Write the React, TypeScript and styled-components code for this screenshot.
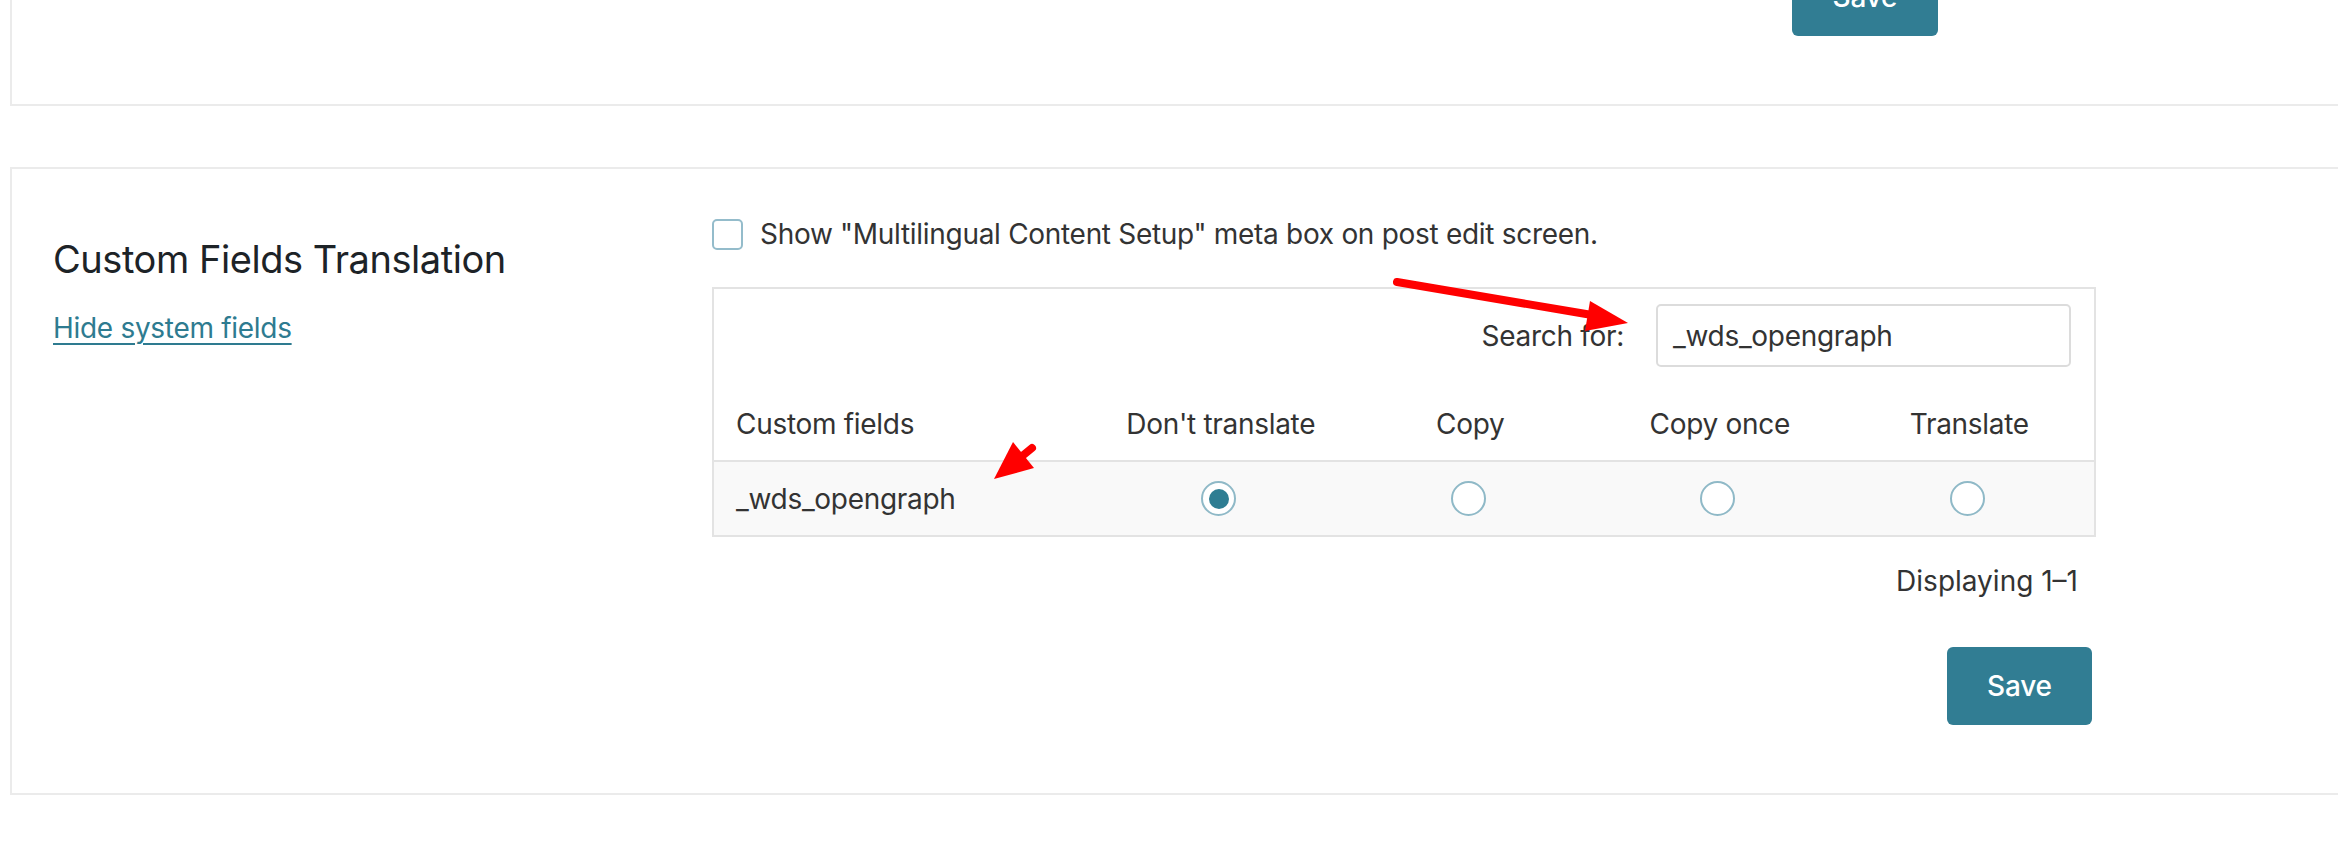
import React from "react";
import styled, { createGlobalStyle } from "styled-components";

const GlobalStyle = createGlobalStyle`
  html, body {
    margin: 0;
    padding: 0;
    background: #ffffff;
  }
  body {
    font-family: Inter, "Noto Sans", "Liberation Sans", sans-serif;
    color: #333333;
  }
  * { box-sizing: border-box; }
`;

const Page = styled.div`
  position: relative;
  width: 2338px;
  height: 848px;
  overflow: hidden;
  background: #ffffff;
  letter-spacing: -0.3px;
`;

const TopPanel = styled.section`
  margin-left: 10px;
  height: 106px;
  border-left: 2px solid #ebebeb;
  border-bottom: 2px solid #ebebeb;
  display: flex;
  justify-content: flex-end;
  align-items: flex-start;
  padding-right: 400px;
`;

const SaveButton = styled.button<{ $width: number; $offsetTop?: number }>`
  width: ${(p) => p.$width}px;
  height: 78px;
  margin-top: ${(p) => p.$offsetTop ?? 0}px;
  border: none;
  border-radius: 6px;
  background: #317d93;
  color: #ffffff;
  font-family: Inter, "Noto Sans", "Liberation Sans", sans-serif;
  font-size: 28px;
  line-height: 40px;
  font-weight: 500;
  letter-spacing: -0.2px;
  cursor: pointer;
  padding: 0;
`;

const SettingsPanel = styled.section`
  margin-top: 61px;
  margin-left: 10px;
  border: 2px solid #ebebeb;
  border-right: none;
  display: grid;
  grid-template-columns: 700px 1384px;
  padding-top: 45px;
  padding-bottom: 68px;
`;

const LeftColumn = styled.div`
  padding-left: 41px;
  display: flex;
  flex-direction: column;
  align-items: flex-start;
`;

const Heading = styled.h3`
  margin: 22px 0 0;
  font-size: 38px;
  line-height: 46px;
  font-weight: 400;
  letter-spacing: -0.45px;
  color: #1d2327;
`;

const TextLink = styled.a`
  margin-top: 26px;
  font-size: 28px;
  line-height: 40px;
  color: #2e7b90;
  text-decoration: underline;
  text-underline-offset: 5px;
  text-decoration-thickness: 2px;
  cursor: pointer;
`;

const RightColumn = styled.div`
  display: flex;
  flex-direction: column;
`;

const CheckRow = styled.label`
  display: flex;
  align-items: center;
  gap: 17px;
  height: 40px;
  font-size: 28px;
  line-height: 40px;
  color: #333333;
`;

const CheckBox = styled.span`
  width: 31px;
  height: 31px;
  border: 2px solid #94bccb;
  border-radius: 5px;
  background: #ffffff;
  flex: none;
`;

const FieldsTable = styled.div`
  margin-top: 33px;
  width: 1384px;
  border: 2px solid #e3e3e3;
`;

const SearchBar = styled.div`
  display: flex;
  justify-content: flex-end;
  align-items: center;
  gap: 32px;
  padding: 15px 23px 21px;
  font-size: 28px;
  line-height: 40px;
`;

const SearchInput = styled.div`
  width: 415px;
  height: 63px;
  border: 2px solid #dcdcdc;
  border-radius: 5px;
  padding-left: 15px;
  display: flex;
  align-items: center;
  font-size: 28px;
  color: #333333;
  background: #ffffff;
`;

const Row = styled.div<{ $shaded?: boolean }>`
  display: grid;
  grid-template-columns: 382px repeat(4, 1fr);
  align-items: center;
  background: ${(p) => (p.$shaded ? "#f9f9f9" : "#ffffff")};
  border-bottom: ${(p) => (p.$shaded ? "none" : "2px solid #e3e3e3")};
  height: ${(p) => (p.$shaded ? "73px" : "74px")};
`;

const Cell = styled.div<{ $first?: boolean }>`
  padding: 0 ${(p) => (p.$first ? "22px" : "0")};
  text-align: ${(p) => (p.$first ? "left" : "center")};
  font-size: 28px;
  line-height: 40px;
  color: #333333;
  display: flex;
  justify-content: ${(p) => (p.$first ? "flex-start" : "center")};
  align-items: center;
`;

const Radio = styled.span<{ $checked?: boolean }>`
  width: 35px;
  height: 35px;
  border-radius: 50%;
  border: 2px solid #8fb9c7;
  background: #ffffff;
  margin-right: 4px;
  display: flex;
  align-items: center;
  justify-content: center;
  &::after {
    content: "";
    width: 20px;
    height: 20px;
    border-radius: 50%;
    background: ${(p) => (p.$checked ? "#2e7d92" : "transparent")};
  }
`;

const Pagination = styled.div`
  margin-top: 24px;
  padding-right: 18px;
  text-align: right;
  font-size: 28px;
  line-height: 40px;
  letter-spacing: 0;
  color: #333333;
`;

const SaveRow = styled.div`
  margin-top: 46px;
  display: flex;
  justify-content: flex-end;
  padding-right: 4px;
`;

const Annotations = styled.svg`
  position: absolute;
  top: 0;
  left: 0;
  pointer-events: none;
`;

const columns = ["Don't translate", "Copy", "Copy once", "Translate"];

export default function App() {
  return (
    <>
      <GlobalStyle />
      <Page>
        <TopPanel>
          <SaveButton $width={146} $offsetTop={-42}>Save</SaveButton>
        </TopPanel>

        <SettingsPanel>
          <LeftColumn>
            <Heading>Custom Fields Translation</Heading>
            <TextLink>Hide system fields</TextLink>
          </LeftColumn>

          <RightColumn>
            <CheckRow>
              <CheckBox />
              Show "Multilingual Content Setup" meta box on post edit screen.
            </CheckRow>

            <FieldsTable>
              <SearchBar>
                <span>Search for:</span>
                <SearchInput>_wds_opengraph</SearchInput>
              </SearchBar>
              <Row>
                <Cell $first>Custom fields</Cell>
                {columns.map((c) => (
                  <Cell key={c}>{c}</Cell>
                ))}
              </Row>
              <Row $shaded>
                <Cell $first>_wds_opengraph</Cell>
                {columns.map((c, i) => (
                  <Cell key={c}>
                    <Radio $checked={i === 0} />
                  </Cell>
                ))}
              </Row>
            </FieldsTable>

            <Pagination>Displaying 1–1</Pagination>
            <SaveRow>
              <SaveButton $width={145}>Save</SaveButton>
            </SaveRow>
          </RightColumn>
        </SettingsPanel>

        <Annotations width="2338" height="848" viewBox="0 0 2338 848">
          <line x1="1397" y1="282" x2="1592" y2="315" stroke="#ff0000" strokeWidth="8" strokeLinecap="round" />
          <polygon points="1590,301 1585,331 1628,323" fill="#ff0000" />
          <line x1="1032" y1="448" x2="1021" y2="457" stroke="#ff0000" strokeWidth="8" strokeLinecap="round" />
          <polygon points="1013,442 1034,468 994,479" fill="#ff0000" />
        </Annotations>
      </Page>
    </>
  );
}
